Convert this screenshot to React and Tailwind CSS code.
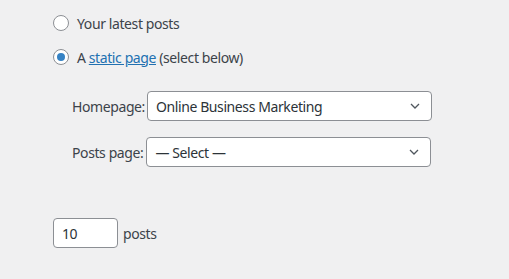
function Radio({ checked, children }) {
  return (
    <label className="flex items-center gap-2 h-4">
      <span className="w-4 h-4 rounded-full border border-[#8c8f94] bg-white flex items-center justify-center shrink-0">
        {checked && <span className="w-2 h-2 rounded-full bg-[#3582c4]" />}
      </span>
      <span>{children}</span>
    </label>
  );
}

function Select({ value, className }) {
  return (
    <div
      className={`h-[30px] rounded-[4px] border border-[#8c8f94] bg-white flex items-center justify-between pl-2 pr-[10px] text-[#2c3338] ${className}`}
    >
      <span>{value}</span>
      <svg width="12" height="8" viewBox="0 0 12 8" fill="none">
        <path d="M2 2l4 4 4-4" stroke="#50575e" strokeWidth="1.3" />
      </svg>
    </div>
  );
}

export default function App() {
  return (
    <div className="w-[509px] h-[279px] bg-[#f0f0f1] text-[#3c434a] text-[14px] tracking-[-0.4px] font-['Noto_Sans',sans-serif] pl-[53px] pt-[15px]">
      <div className="flex flex-col gap-[18px]">
        <Radio>Your latest posts</Radio>
        <Radio checked>
          A{' '}
          <a className="text-[#2271b1] underline">static page</a> (select below)
        </Radio>
      </div>

      <div className="ml-[19px] mt-[26px] flex flex-col gap-4">
        <div className="flex items-center gap-[2px]">
          <span>Homepage:</span>
          <Select value="Online Business Marketing" className="w-[285px]" />
        </div>
        <div className="flex items-center gap-[3px]">
          <span>Posts page:</span>
          <Select value="— Select —" className="w-[285px]" />
        </div>
      </div>

      <div className="mt-[51px] flex items-center gap-[5px]">
        <div className="w-[65px] h-[30px] rounded-[4px] border border-[#8c8f94] bg-white pl-2 flex items-center text-[#2c3338]">
          10
        </div>
        <span>posts</span>
      </div>
    </div>
  );
}
